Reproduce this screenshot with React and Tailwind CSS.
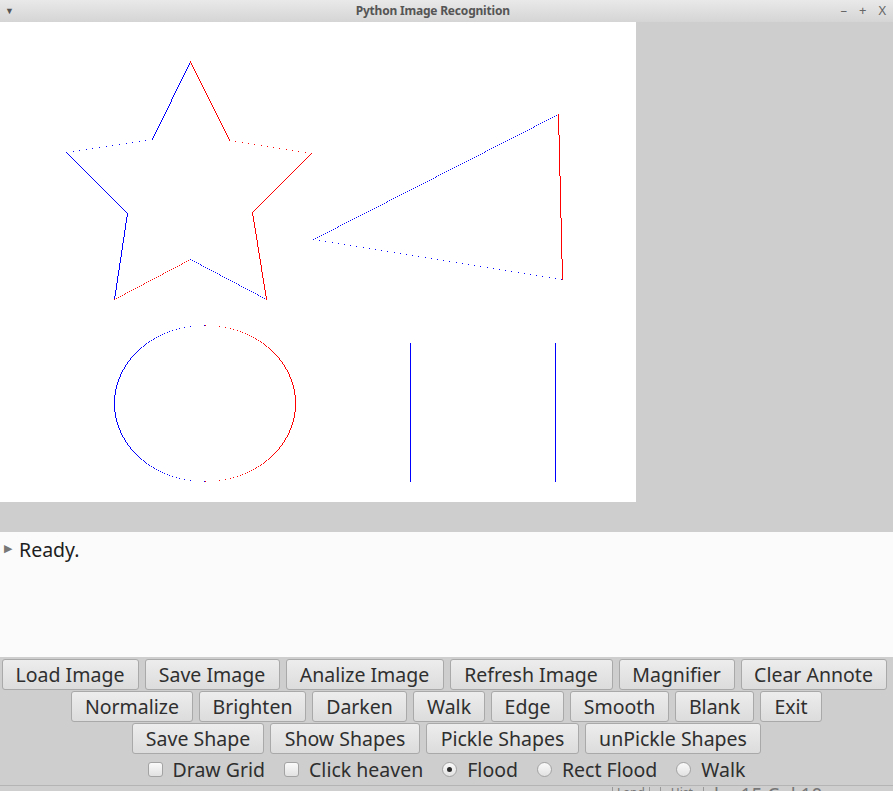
import React from "react";

// pixels plotted one per row, like the original tk canvas drawing
const plot = (x1, y1, x2, y2) => {
  let d = "";
  const lo = Math.min(y1, y2);
  const hi = Math.max(y1, y2);
  for (let y = lo; y <= hi; y++) {
    const x = y1 === y2 ? x1 : Math.round(x1 + ((y - y1) * (x2 - x1)) / (y2 - y1));
    d += `M${x} ${y}h1v1h-1z`;
  }
  return d;
};

const ellipseHalf = (cx, cy, rx, ry, side) => {
  let d = "";
  for (let y = cy - ry; y <= cy + ry; y++) {
    const t = (y - cy) / ry;
    const dx = rx * Math.sqrt(Math.max(0, 1 - t * t));
    const x = Math.round(side < 0 ? cx - dx : cx + dx);
    d += `M${x} ${y}h1v1h-1z`;
  }
  return d;
};

const BLUE = "#0000ff";
const RED = "#ff0000";

const segments = [
  // star
  [190, 39, 152, 117, BLUE],
  [152, 117, 66, 130, BLUE],
  [66, 130, 127, 191, BLUE],
  [127, 191, 114, 277, BLUE],
  [114, 277, 190, 237, RED],
  [190, 237, 266, 277, BLUE],
  [266, 277, 252, 190, RED],
  [252, 190, 311, 131, RED],
  [311, 131, 229, 118, RED],
  [229, 118, 190, 39, RED],
  // triangle
  [558, 92, 313, 217, BLUE],
  [313, 217, 561, 257, BLUE],
  [558, 92, 562, 257, RED],
  // bars
  [410, 321, 410, 459, BLUE],
  [555, 321, 555, 459, BLUE],
];

const Drawing = () => (
  <svg width="636" height="480" shapeRendering="crispEdges" className="block">
    {segments.map(([a, b, c, d, col], i) => (
      <path key={i} d={plot(a, b, c, d)} fill={col} />
    ))}
    <path d={ellipseHalf(204, 381, 90, 78, -1)} fill={BLUE} />
    <path d={ellipseHalf(205, 381, 90, 78, 1)} fill={RED} />
  </svg>
);

const rows = [
  [
    ["Load Image", "w-[137px]"],
    ["Save Image", "w-[135px]"],
    ["Analize Image", "w-[158px]"],
    ["Refresh Image", "w-[163px]"],
    ["Magnifier", "w-[116px]"],
    ["Clear Annote", "w-[146px]"],
  ],
  [
    ["Normalize", "w-[122px]"],
    ["Brighten", "w-[107px]"],
    ["Darken", "w-[95px]"],
    ["Walk", "w-[72px]"],
    ["Edge", "w-[73px]"],
    ["Smooth", "w-[99px]"],
    ["Blank", "w-[79px]"],
    ["Exit", "w-[62px]"],
  ],
  [
    ["Save Shape", "w-[132px]"],
    ["Show Shapes", "w-[150px]"],
    ["Pickle Shapes", "w-[153px]"],
    ["unPickle Shapes", "w-[176px]"],
  ],
];
const rowPad = ["pr-[5px]", "", ""];

const Btn = ({ label, w }) => (
  <div
    className={`${w} h-[31px] shrink-0 flex items-center justify-center rounded-[3px] border border-[#a9a9a9] bg-linear-to-b from-[#ededed] to-[#dcdcdc] text-[19.5px] text-[#2f2f2f] leading-none`}
  >
    {label}
  </div>
);

const Check = ({ label, on, radio }) => (
  <div className="flex items-center gap-[10px]">
    <div
      className={`w-[15px] h-[15px] flex items-center justify-center border border-[#a3a3a3] bg-linear-to-b from-[#fafafa] to-[#e2e2e2] ${
        radio ? "rounded-full" : "rounded-[3px]"
      }`}
    >
      {on && <div className="w-[5px] h-[5px] rounded-full bg-[#2a2a2a]" />}
    </div>
    <span className="text-[19.5px] text-[#2f2f2f] leading-none">{label}</span>
  </div>
);

export default function App() {
  return (
    <div
      className="w-[893px] h-[791px] overflow-hidden bg-[#cecece] flex flex-col"
      style={{ fontFamily: '"Noto Sans", "Open Sans", sans-serif' }}
    >
      {/* Title bar */}
      <div className="h-[22px] shrink-0 flex items-center px-[5px] bg-linear-to-b from-[#e9e9e9] to-[#d5d5d5] text-[#555]">
        <span className="text-[9px] w-[20px]">▼</span>
        <div className="flex-1 text-center text-[12px] font-bold tracking-[-0.2px]">
          Python Image Recognition
        </div>
        <div className="flex gap-[12px] text-[13px] text-[#666] pr-[2px]">
          <span>–</span>
          <span>+</span>
          <span>X</span>
        </div>
      </div>

      {/* Canvas */}
      <div className="flex h-[480px] shrink-0">
        <div className="w-[636px] h-[480px] bg-white">
          <Drawing />
        </div>
      </div>
      <div className="h-[30px] shrink-0" />

      {/* Status log */}
      <div className="h-[125px] shrink-0 bg-[#fbfbfb] flex items-start pt-[6px] pl-[4px]">
        <span className="text-[#777] text-[11px] mt-[2px] w-[15px]">▶</span>
        <span className="text-[19.5px] text-[#1e1e1e] leading-[24px]">Ready.</span>
      </div>

      {/* Buttons */}
      <div className="flex flex-col gap-[1px] pt-[2px] shrink-0">
        {rows.map((row, i) => (
          <div key={i} className={`flex justify-center gap-[6px] ${rowPad[i]}`}>
            {row.map(([label, w]) => (
              <Btn key={label} label={label} w={w} />
            ))}
          </div>
        ))}
      </div>

      <div className="h-[32px] shrink-0 flex items-center justify-center gap-[19px] border-b border-[#b4b4b4]">
        <Check label="Draw Grid" />
        <Check label="Click heaven" />
        <Check label="Flood" radio on />
        <Check label="Rect Flood" radio />
        <Check label="Walk" radio />
      </div>

      {/* status bar, cut off at window bottom */}
      <div className="flex items-start gap-[10px] pl-[612px] pt-[1px] shrink-0 text-[#777]">
        <span className="text-[12px] leading-none border-x border-[#999] px-[4px]">Land</span>
        <span className="text-[12px] leading-none border-x border-[#999] px-[10px]">Hist</span>
        <span className="text-[19px] leading-none -mt-[1px]">ln: 15 Col 10</span>
      </div>
    </div>
  );
}
